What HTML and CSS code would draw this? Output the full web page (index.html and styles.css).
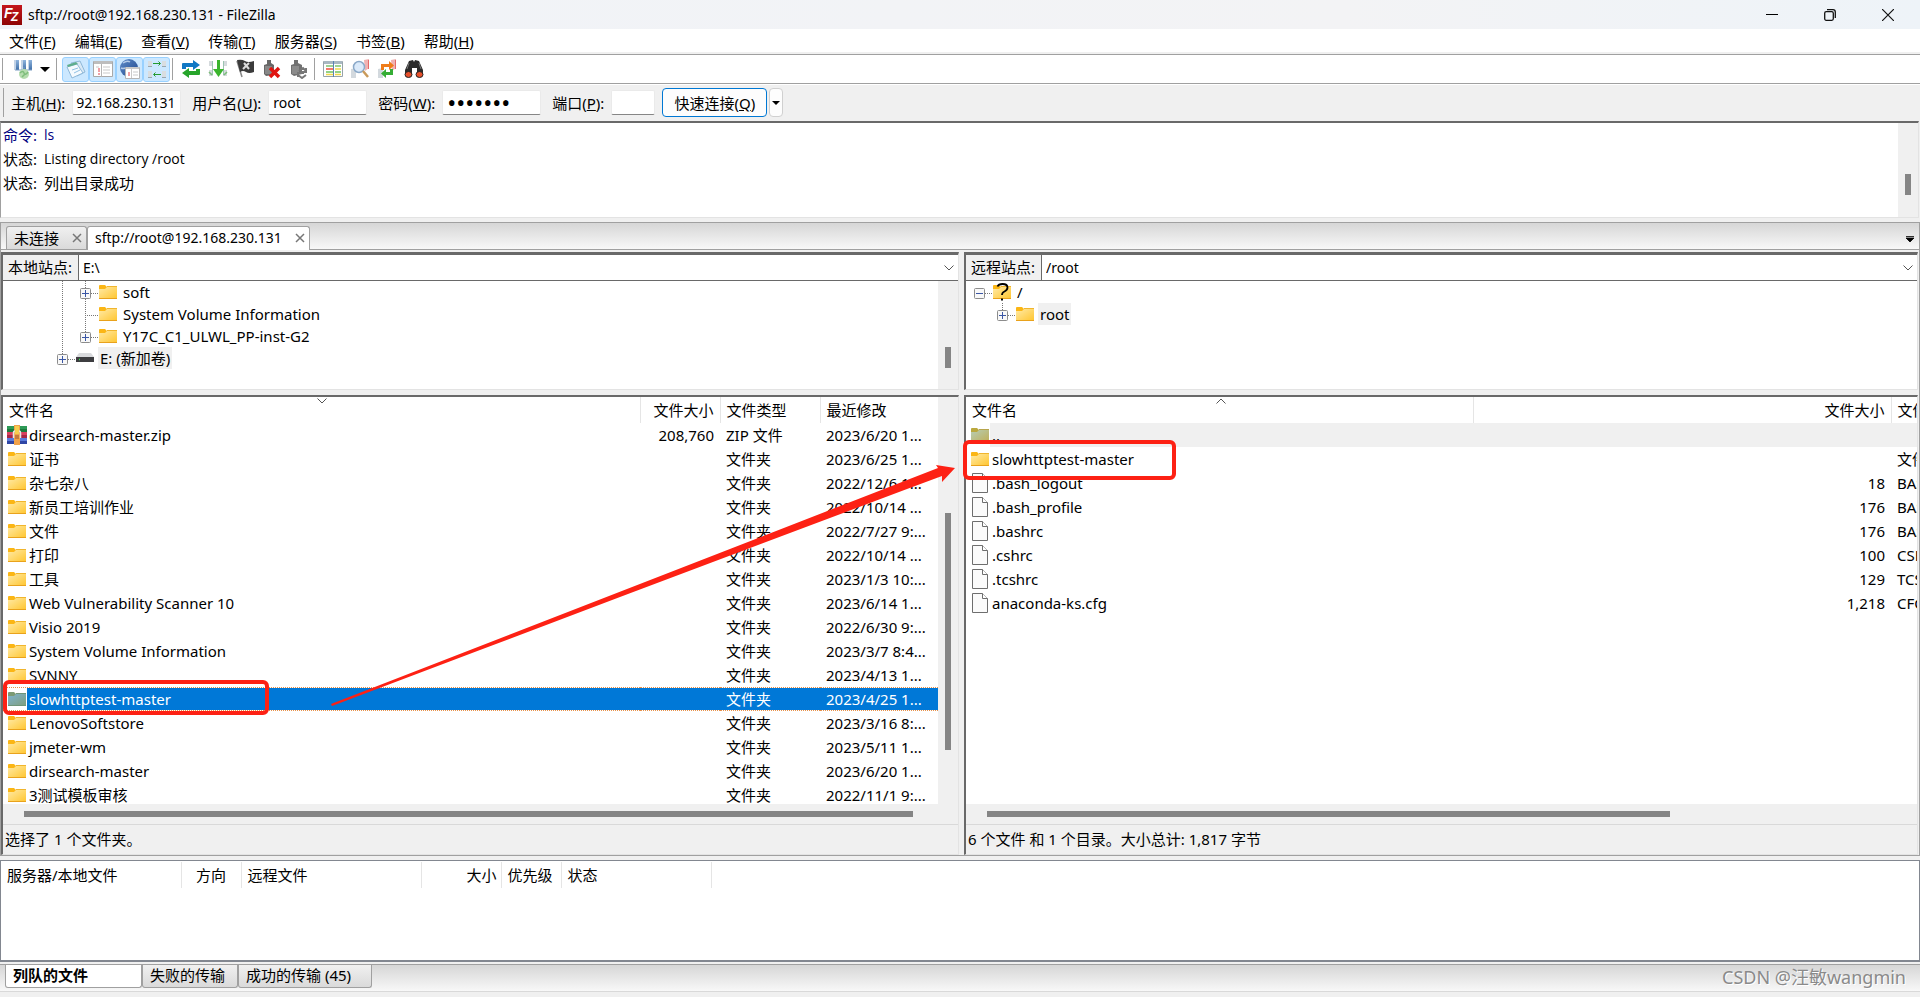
FILE: index.html
```html
<!DOCTYPE html>
<html lang="zh-CN">
<head>
<meta charset="utf-8">
<title>sftp://root@192.168.230.131 - FileZilla</title>
<link rel="stylesheet" href="styles.css">
</head>
<body>
<svg class="defs" width="0" height="0" aria-hidden="true">
  <defs>
    <linearGradient id="gFolder" x1="0" y1="0" x2="1" y2="1"><stop offset="0" stop-color="#ffeaa6"/><stop offset="1" stop-color="#ffc52e"/></linearGradient>
    <linearGradient id="gFolderSel" x1="0" y1="0" x2="1" y2="1"><stop offset="0" stop-color="#7fb2cf"/><stop offset="1" stop-color="#7f9f7c"/></linearGradient>
    <linearGradient id="gFolderDim" x1="0" y1="0" x2="1" y2="1"><stop offset="0" stop-color="#b7cdb4"/><stop offset="1" stop-color="#c0ae57"/></linearGradient>
    <linearGradient id="gLogo" x1="0" y1="0" x2="0" y2="1"><stop offset="0" stop-color="#c4161c"/><stop offset="1" stop-color="#8e0505"/></linearGradient>
    <linearGradient id="gServer" x1="0" y1="0" x2="0" y2="1"><stop offset="0" stop-color="#8fb4dd"/><stop offset="1" stop-color="#3f6fa8"/></linearGradient>
    <linearGradient id="gGlobe" x1="0" y1="0" x2="1" y2="1"><stop offset="0" stop-color="#5f8cc9"/><stop offset="1" stop-color="#1d468c"/></linearGradient>
  </defs>
  <symbol id="folder" viewBox="0 0 18 14"><path d="M0 1q0-1 1-1h5l2 2v3H0z" fill="#fbb615"/><path d="M0 4h6l2-2h10v12H0z" fill="url(#gFolder)"/><path d="M0 13.500h18" stroke="#e9a21c"/><path d="M8 1.500h10" stroke="#f0b52e"/></symbol>
  <symbol id="folder-sel" viewBox="0 0 18 14"><path d="M0 1q0-1 1-1h5l2 2v3H0z" fill="#7c9a74"/><path d="M0 4h6l2-2h10v12H0z" fill="url(#gFolderSel)"/><path d="M0 13.500h18M8 1.500h10" stroke="#6f9579"/></symbol>
  <symbol id="folder-dim" viewBox="0 0 18 14"><path d="M0 1q0-1 1-1h5l2 2v3H0z" fill="#bba83e"/><path d="M0 4h6l2-2h10v12H0z" fill="url(#gFolderDim)"/><path d="M0 13.500h18M8 1.500h10" stroke="#b7a54d"/></symbol>
  <symbol id="file" viewBox="0 0 16 20"><path d="M.5.500h10l5 5v14H.5z" fill="#fbfbfb" stroke="#6e6e6e"/><path d="M10.500.500v5h5" fill="#fff" stroke="#6e6e6e"/></symbol>
  <symbol id="zip" viewBox="0 0 20 20"><path fill="#2e9a57" d="M0 1h20v6H0z"/><path fill="#1c7a3c" d="M0 4h20v3H0z"/><path fill="#d8405e" d="M0 7h20v6H0z"/><path fill="#a82746" d="M0 10h20v3H0z"/><path fill="#5a7bdc" d="M0 13h20v6H0z"/><path fill="#2f46a5" d="M0 16h20v3H0z"/><path fill="#f1a24a" d="M7 0h6v20H7z"/><path fill="#f6ce4f" d="M8 1h4v8H8z"/><path d="M6.500 13V8q0-2 1.500-2M13.500 13V8q0-2-1.500-2" fill="none" stroke="#e6e6ea" stroke-width="1.500"/><path fill="#c67a3c" d="M8 10h4v4H8z"/></symbol>
  <symbol id="chev" viewBox="0 0 10 6"><path d="M.5.500L5 5 9.500.500" fill="none" stroke="#555"/></symbol>
  <symbol id="caret" viewBox="0 0 10 5"><path d="M0 0h10L5 5z" fill="#000"/></symbol>
  <symbol id="cross" viewBox="0 0 10 10"><path d="M1 1l8 8M9 1l-8 8" stroke="#777" stroke-width="1.500"/></symbol>
</svg>

<div class="app">
  <header class="title-bar">
    <svg class="logo" viewBox="0 0 20 20"><path fill="url(#gLogo)" d="M0 0h20v20H0z"/><text x="2" y="13" class="logo-f">F</text><text x="9" y="16" class="logo-z">Z</text></svg>
    <h1 class="title">sftp://root@192.168.230.131 - FileZilla</h1>
    <div class="window-buttons">
      <button class="window-button" aria-label="最小化"><svg width="12" height="12"><path d="M0 5.500h12" stroke="#000"/></svg></button>
      <button class="window-button" aria-label="还原"><svg width="12" height="12" fill="none" stroke="#111"><rect x=".7" y="2.700" width="8.600" height="8.600" rx="1.500" stroke-width="1.300"/><path d="M3 .7h6q2.300 0 2.300 2.300v6" stroke-width="1.300"/></svg></button>
      <button class="window-button" aria-label="关闭"><svg width="12" height="12"><path d="M0 0l12 12M12 0L0 12" stroke="#111" stroke-width="1.200"/></svg></button>
    </div>
  </header>

  <nav class="menu-bar">
    <button class="menu">文件(<u>F</u>)</button><button class="menu">编辑(<u>E</u>)</button><button class="menu">查看(<u>V</u>)</button><button class="menu">传输(<u>T</u>)</button><button class="menu">服务器(<u>S</u>)</button><button class="menu">书签(<u>B</u>)</button><button class="menu">帮助(<u>H</u>)</button>
  </nav>

  <div class="tool-bar">
    <span class="rule"></span>
    <button class="tool tool-site" aria-label="站点管理器"><svg viewBox="0 0 20 20"><path fill="#c3d3e6" d="M1 1h5v10H1zM8 1h5v10H8zM15 1h4v10h-4z"/><path fill="url(#gServer)" d="M3 1h3v10H3zM10 1h3v10h-3zM16 1h3v10h-3z"/><path d="M2 11h17M11 8v5" stroke="#7f9fc4"/><circle cx="11" cy="15" r="5" fill="#b5dcae"/><path d="M7 14q3-3 4 0t4-1M9 18l3-3" stroke="#7fbd7c" stroke-width="1.500" fill="none"/></svg></button>
    <button class="tool-drop" aria-label="站点列表"><svg width="10" height="5"><use href="#caret"/></svg></button>
    <span class="rule"></span>
    <div class="toggles">
      <button class="toggle" aria-label="消息日志"><svg viewBox="0 0 20 20"><path d="M5 4l9-2 5 11-8 4z" fill="#d9e9f6" stroke="#8fb8d8"/><path d="M1 8l10-3 6 9-11 5z" fill="#f5fafe" stroke="#8fb8d8"/><path d="M6 11l6-2M8 14l6-3" stroke="#8fc0e4"/><path d="M1 6l9-3 2 2-10 3z" fill="#5fae8d"/></svg></button>
      <button class="toggle" aria-label="本地目录树"><svg viewBox="0 0 20 20"><path d="M.5 2.500h19v15H.5z" fill="#fff" stroke="#a9a9a9"/><path d="M1 2h18v3H1z" fill="#bdbdbd"/><path d="M8.500 5v13" stroke="#b5b5b5"/><path d="M10 8h7M10 11h7M10 14h7M3 8h3" stroke="#c9c9c9"/><path d="M5 10h2M5 12h2M5 15h2" stroke="#e0404c"/></svg></button>
      <button class="toggle" aria-label="远程目录树"><svg viewBox="0 0 20 20"><circle cx="9" cy="9" r="9" fill="url(#gGlobe)"/><path d="M3 4q4-3 7-1M1 9q2 1 4 0" stroke="#b3cbe9" stroke-width="1.500" fill="none"/><path d="M5.500 8.500h14v11h-14z" fill="#fff" stroke="#b5b5b5"/><path d="M6 8h13v2H6z" fill="#c9c9c9"/><path d="M11.500 10v9M13 13h5M13 16h5" stroke="#c9c9c9"/><path d="M8 14h2M8 16h2" stroke="#e0404c"/></svg></button>
      <button class="toggle" aria-label="传输队列"><svg viewBox="0 0 20 20"><path d="M1 2h4v5H1zM15 2h4v5h-4zM1 12h4v6H1zM15 12h4v6h-4z" fill="#d9dde0"/><path d="M1 7.500h4M15 7.500h4M1 18.500h4M15 18.500h4" stroke="#9aa7b0"/><path d="M6 4.500h7M11.500 2.500l2 2-2 2M14 15.500H7M8.500 13.500l-2 2 2 2" stroke="#239a2f" fill="none"/></svg></button>
    </div>
    <span class="rule"></span>
    <div class="tools">
      <button class="tool" aria-label="刷新"><svg viewBox="0 0 20 20"><path d="M1 10V5q0-1 1-1h10V1l7 5-7 5V8H5v2z" fill="#1178c4"/><path d="M19 10v5q0 1-1 1H8v3l-7-5 7-5v3h7v-2z" fill="#27a52b"/></svg></button>
      <button class="tool" aria-label="处理队列"><svg viewBox="0 0 20 20"><path d="M1 2h4v5H1zM15 2h4v5h-4zM1 11h4v6H1zM15 11h4v6h-4z" fill="#d5dadd"/><path d="M4.500 2v14M15.500 2v14" stroke="#9cc4b2"/><path d="M9 1h3v9h4l-5.500 8L5 10h4z" fill="#3bb52d"/><path d="M1 13l3 3M19 13l-3 3" stroke="#7cbd7a" stroke-width="1.500"/></svg></button>
      <button class="tool" aria-label="取消操作"><svg viewBox="0 0 20 20"><path d="M2 2l5 16" stroke="#888" stroke-width="1.500"/><path d="M2 1q5-1 8 1t9 0v11q-5 2-8 0t-6 0z" fill="#3b3b3b"/><path d="M9 4l5 6M14 4l-6 6" stroke="#ddd" stroke-width="2"/></svg></button>
      <button class="tool" aria-label="断开连接"><svg viewBox="0 0 20 20"><path d="M2 6l3-1V1h4v3l3 2v10l-8 1-2-2z" fill="#686868"/><path d="M3 7h7v8H3z" fill="#888"/><path d="M8 9l9 9M17 9l-9 9" stroke="#e01510" stroke-width="3.500"/></svg></button>
      <button class="tool" aria-label="重新连接"><svg viewBox="0 0 20 20"><path d="M2 6l3-1V1h4v3l4 2v9l-8 2-3-2z" fill="#717171"/><path d="M3 7h7v8H3z" fill="#8c8c8c"/><path d="M17 9v4h-5M9 18v-4h6M10 12l4-3 3 3M17 16l-4 3-4-3" stroke="#777" stroke-width="2" fill="none"/></svg></button>
    </div>
    <span class="rule"></span>
    <div class="tools">
      <button class="tool" aria-label="目录列表过滤器"><svg viewBox="0 0 20 20"><path d="M.5 2.500h19v15H.5z" fill="#fff" stroke="#97a3aa"/><path d="M1 2h18v3H1z" fill="#a9b8c2"/><path d="M3 7h7M12 7h6" stroke="#7fc36f" stroke-width="1.500"/><path d="M3 10h7" stroke="#f04b3a" stroke-width="1.500"/><path d="M12 10h6" stroke="#efd84a" stroke-width="1.500"/><path d="M3 13h7M12 13h6" stroke="#6fc35f" stroke-width="1.500"/><path d="M3 15.500h7M12 15.500h6" stroke="#efd84a" stroke-width="1.500"/><path d="M10.500 2v16" stroke="#5a83b4"/></svg></button>
      <button class="tool" aria-label="目录比较"><svg viewBox="0 0 20 20"><path d="M14 1l5-1v9l-4 3z" fill="#f0b2b2"/><path d="M18.500 1v9" stroke="#e46a6a"/><path d="M1 10l5-1v10H1z" fill="#d3d9de"/><circle cx="9" cy="8" r="5.500" fill="#dbeafa" stroke="#8ba9c9" stroke-width="1.500"/><path d="M13 12l5 6" stroke="#c99a5a" stroke-width="2.500"/></svg></button>
      <button class="tool" aria-label="同步浏览"><svg viewBox="0 0 20 20"><path d="M14 1l5-1v9l-4 3z" fill="#f0b2b2"/><path d="M18.500 1v9" stroke="#e46a6a"/><path d="M1 10l5-1v10H1z" fill="#d3d9de"/><path d="M4 11V5h8V2l5 4.500-5 4.500V8H7v3z" fill="#ef7d1a"/><path d="M16 10v6H9v3l-5-4.500L9 10v3h4v-3z" fill="#35ad35"/></svg></button>
      <button class="tool" aria-label="搜索远程文件"><svg viewBox="0 0 20 20"><path d="M5 2l4-1 1 2 1-2 4 1 4 9v5h-6V9H8v7H1v-5z" fill="#2b2b2b"/><path d="M5 4L3 10M15 4l2 6" stroke="#777"/><ellipse cx="4.500" cy="15.500" rx="3.500" ry="3" fill="#e8502b" stroke="#222"/><ellipse cx="15.500" cy="15.500" rx="3.500" ry="3" fill="#e8502b" stroke="#222"/></svg></button>
    </div>
  </div>

  <form class="quick-connect">
    <span class="rule"></span>
    <label class="qc-label" for="host">主机(<u>H</u>):</label><input class="field field-host" id="host" value="92.168.230.131">
    <label class="qc-label" for="user">用户名(<u>U</u>):</label><input class="field field-user" id="user" value="root">
    <label class="qc-label" for="pass">密码(<u>W</u>):</label><input class="field field-pass" id="pass" type="password" value="1234567">
    <label class="qc-label" for="port">端口(<u>P</u>):</label><input class="field field-port" id="port">
    <button class="connect" type="button">快速连接(<u>Q</u>)</button>
    <button class="connect-drop" type="button" aria-label="历史记录"><svg width="8" height="4"><use href="#caret"/></svg></button>
  </form>

  <section class="log">
    <div class="log-text">
      <p class="log-line log-command"><span class="log-kind">命令:</span><span class="log-latin">ls</span></p>
      <p class="log-line"><span class="log-kind">状态:</span><span class="log-latin">Listing directory /root</span></p>
      <p class="log-line"><span class="log-kind">状态:</span><span>列出目录成功</span></p>
    </div>
    <div class="scroll-y"><span class="thumb log-thumb"></span></div>
  </section>

  <section class="session">
    <div class="tabs">
      <button class="tab">未连接<svg width="10" height="10"><use href="#cross"/></svg></button>
      <button class="tab tab-active">sftp://root@192.168.230.131<svg width="10" height="10"><use href="#cross"/></svg></button>
      <button class="tab-list" aria-label="标签列表"><svg width="8" height="6"><path d="M0 .5h8M0 2h8L4 6z" stroke="#000" stroke-width=".8"/></svg></button>
    </div>
    <div class="panes">
      <div class="pane">
        <div class="pane-top">
          <div class="site-bar">
            <label class="site-label" for="local">本地站点:</label>
            <div class="combo"><select class="combo-select" id="local"><option>E:\</option></select><svg class="combo-arrow" width="10" height="6"><use href="#chev"/></svg></div>
          </div>
          <div class="tree-area">
            <ul class="tree">
              <li class="tree-row"><svg class="gutter" width="96" height="22"><path class="dots" d="M59.500 0v22M82.500 0v22M88 12.500h7"/><rect class="box" x="77.500" y="7.500" width="10" height="10" rx="1"/><path class="sign" d="M79 12.500h7M82.500 9v7"/></svg><svg width="18" height="14"><use href="#folder"/></svg><span class="tree-name">soft</span></li>
              <li class="tree-row"><svg class="gutter" width="96" height="22"><path class="dots" d="M59.500 0v22M82.500 0v22M82 12.500h13"/></svg><svg width="18" height="14"><use href="#folder"/></svg><span class="tree-name">System Volume Information</span></li>
              <li class="tree-row"><svg class="gutter" width="96" height="22"><path class="dots" d="M59.500 0v22M82.500 0v7M88 12.500h7"/><rect class="box" x="77.500" y="7.500" width="10" height="10" rx="1"/><path class="sign" d="M79 12.500h7M82.500 9v7"/></svg><svg width="18" height="14"><use href="#folder"/></svg><span class="tree-name">Y17C_C1_ULWL_PP-inst-G2</span></li>
              <li class="tree-row"><svg class="gutter" width="73" height="22"><path class="dots" d="M59.500 0v7M65 12.500h7"/><rect class="box" x="54.500" y="7.500" width="10" height="10" rx="1"/><path class="sign" d="M56 12.500h7M59.500 9v7"/></svg><svg width="18" height="14"><path d="M3 2h12l3 4H0z" fill="#d9dadd"/><path d="M0 6h18v5H0z" fill="#3d3d40"/><path d="M3 8.500h1" stroke="#2fe04a" stroke-width="1.500"/></svg><span class="tree-name tree-current">E: (新加卷)</span></li>
            </ul>
            <div class="scroll-y"><span class="thumb tree-thumb"></span></div>
          </div>
        </div>
        <div class="pane-files">
          <div class="files-area">
            <div class="files-scroll">
              <svg class="sort sort-local" width="10" height="6"><use href="#chev"/></svg>
              <table class="files">
                <colgroup><col><col class="w-size"><col class="w-type"><col class="w-date"></colgroup>
                <thead><tr><th>文件名</th><th class="num">文件大小</th><th>文件类型</th><th>最近修改</th></tr></thead>
                <tbody>
                  <tr><td><div class="name"><svg width="20" height="20" class="zip"><use href="#zip"/></svg>dirsearch-master.zip</div></td><td class="num">208,760</td><td>ZIP 文件</td><td>2023/6/20 1...</td></tr>
                  <tr><td><div class="name"><svg width="18" height="14"><use href="#folder"/></svg>证书</div></td><td></td><td>文件夹</td><td>2023/6/25 1...</td></tr>
                  <tr><td><div class="name"><svg width="18" height="14"><use href="#folder"/></svg>杂七杂八</div></td><td></td><td>文件夹</td><td>2022/12/6 1...</td></tr>
                  <tr><td><div class="name"><svg width="18" height="14"><use href="#folder"/></svg>新员工培训作业</div></td><td></td><td>文件夹</td><td>2022/10/14 ...</td></tr>
                  <tr><td><div class="name"><svg width="18" height="14"><use href="#folder"/></svg>文件</div></td><td></td><td>文件夹</td><td>2022/7/27 9:...</td></tr>
                  <tr><td><div class="name"><svg width="18" height="14"><use href="#folder"/></svg>打印</div></td><td></td><td>文件夹</td><td>2022/10/14 ...</td></tr>
                  <tr><td><div class="name"><svg width="18" height="14"><use href="#folder"/></svg>工具</div></td><td></td><td>文件夹</td><td>2023/1/3 10:...</td></tr>
                  <tr><td><div class="name"><svg width="18" height="14"><use href="#folder"/></svg>Web Vulnerability Scanner 10</div></td><td></td><td>文件夹</td><td>2023/6/14 1...</td></tr>
                  <tr><td><div class="name"><svg width="18" height="14"><use href="#folder"/></svg>Visio 2019</div></td><td></td><td>文件夹</td><td>2022/6/30 9:...</td></tr>
                  <tr><td><div class="name"><svg width="18" height="14"><use href="#folder"/></svg>System Volume Information</div></td><td></td><td>文件夹</td><td>2023/3/7 8:4...</td></tr>
                  <tr><td><div class="name"><svg width="18" height="14"><use href="#folder"/></svg>SVNNY</div></td><td></td><td>文件夹</td><td>2023/4/13 1...</td></tr>
                  <tr class="selected"><td><div class="name"><svg width="18" height="14"><use href="#folder-sel"/></svg>slowhttptest-master</div></td><td></td><td>文件夹</td><td>2023/4/25 1...</td></tr>
                  <tr><td><div class="name"><svg width="18" height="14"><use href="#folder"/></svg>LenovoSoftstore</div></td><td></td><td>文件夹</td><td>2023/3/16 8:...</td></tr>
                  <tr><td><div class="name"><svg width="18" height="14"><use href="#folder"/></svg>jmeter-wm</div></td><td></td><td>文件夹</td><td>2023/5/11 1...</td></tr>
                  <tr><td><div class="name"><svg width="18" height="14"><use href="#folder"/></svg>dirsearch-master</div></td><td></td><td>文件夹</td><td>2023/6/20 1...</td></tr>
                  <tr><td><div class="name"><svg width="18" height="14"><use href="#folder"/></svg>3测试模板审核</div></td><td></td><td>文件夹</td><td>2022/11/1 9:...</td></tr>
                </tbody>
              </table>
            </div>
            <div class="scroll-y"><span class="thumb files-thumb"></span></div>
          </div>
          <div class="scroll-x scroll-x-local"><span class="thumb-x"></span></div>
          <div class="pane-status">选择了 1 个文件夹。</div>
        </div>
      </div>
      <div class="pane">
        <div class="pane-top">
          <div class="site-bar">
            <label class="site-label" for="remote">远程站点:</label>
            <div class="combo"><select class="combo-select" id="remote"><option>/root</option></select><svg class="combo-arrow" width="10" height="6"><use href="#chev"/></svg></div>
          </div>
          <div class="tree-area">
            <ul class="tree">
              <li class="tree-row"><svg class="gutter" width="27" height="22"><path class="dots" d="M19 12.500h7"/><rect class="box" x="8.500" y="7.500" width="10" height="10" rx="1"/><path class="sign" d="M10 12.500h7"/></svg><svg width="18" height="18" class="unknown"><use href="#folder" y="2" width="18" height="14"/><path d="M4.500 3.500q1-2.500 5-2.500 5 0 5 3.500 0 2.500-3 4-2.500 1-2.500 3.500" fill="none" stroke="#000" stroke-width="1.800"/><path d="M8 15.500h2v2H8z"/></svg><span class="tree-name">/</span></li>
              <li class="tree-row"><svg class="gutter" width="50" height="22"><path class="dots" d="M36.500 0v7M42 12.500h7"/><rect class="box" x="31.500" y="7.500" width="10" height="10" rx="1"/><path class="sign" d="M33 12.500h7M36.500 9v7"/></svg><svg width="18" height="14"><use href="#folder"/></svg><span class="tree-name tree-current">root</span></li>
            </ul>
          </div>
        </div>
        <div class="pane-files">
          <div class="files-area">
            <div class="files-scroll">
              <svg class="sort sort-remote" width="10" height="6"><use href="#chev"/></svg>
              <table class="files files-remote">
                <colgroup><col class="w-rname"><col><col class="w-rtype"></colgroup>
                <thead><tr><th>文件名</th><th class="num">文件大小</th><th>文件类型</th></tr></thead>
                <tbody>
                  <tr class="parent"><td><div class="name"><svg width="18" height="14"><use href="#folder-dim"/></svg>..</div></td><td></td><td></td></tr>
                  <tr><td><div class="name"><svg width="18" height="14"><use href="#folder"/></svg>slowhttptest-master</div></td><td></td><td>文件夹</td></tr>
                  <tr><td><div class="name"><svg width="18" height="20"><use href="#file"/></svg>.bash_logout</div></td><td class="num">18</td><td>BASH</td></tr>
                  <tr><td><div class="name"><svg width="18" height="20"><use href="#file"/></svg>.bash_profile</div></td><td class="num">176</td><td>BASH</td></tr>
                  <tr><td><div class="name"><svg width="18" height="20"><use href="#file"/></svg>.bashrc</div></td><td class="num">176</td><td>BASH</td></tr>
                  <tr><td><div class="name"><svg width="18" height="20"><use href="#file"/></svg>.cshrc</div></td><td class="num">100</td><td>CSHR</td></tr>
                  <tr><td><div class="name"><svg width="18" height="20"><use href="#file"/></svg>.tcshrc</div></td><td class="num">129</td><td>TCSH</td></tr>
                  <tr><td><div class="name"><svg width="18" height="20"><use href="#file"/></svg>anaconda-ks.cfg</div></td><td class="num">1,218</td><td>CFG</td></tr>
                </tbody>
              </table>
            </div>
          </div>
          <div class="scroll-x scroll-x-remote"><span class="thumb-x"></span></div>
          <div class="pane-status">6 个文件 和 1 个目录。大小总计: 1,817 字节</div>
        </div>
      </div>
    </div>
  </section>

  <section class="queue">
    <table class="queue-table">
      <thead><tr><th class="q-name">服务器/本地文件</th><th class="q-dir">方向</th><th class="q-remote">远程文件</th><th class="q-size">大小</th><th class="q-prio">优先级</th><th class="q-state">状态</th></tr></thead>
    </table>
  </section>
  <div class="queue-tabs">
    <button class="queue-tab queue-tab-active">列队的文件</button><button class="queue-tab queue-tab-failed">失败的传输</button><button class="queue-tab queue-tab-done">成功的传输 (45)</button>
    <span class="watermark">CSDN @汪敏wangmin</span>
  </div>
  <footer class="foot"></footer>

  <svg class="marks" width="1200" height="740" aria-hidden="true">
    <rect x="5" y="682" width="262" height="31" rx="4"/>
    <rect x="965" y="442" width="209" height="36" rx="4"/>
    <path d="M331 704L938 468 936 465 955 468 942 482 942 476 907 489 620 597 480 650 332 706z"/>
  </svg>
</div>
</body>
</html>
```
FILE: styles.css
```css
* { box-sizing: border-box; }

body {
  margin: 0;
  background: #f0f0f0;
  color: #000;
  font: 15px/24px "Noto Sans", "Noto Sans CJK SC", sans-serif;
}

button, input, select { font: inherit; color: inherit; border-radius: 0; }
button { margin: 0; padding: 0; border: 0; background: none; }
ul, p, h1 { margin: 0; padding: 0; list-style: none; }
svg { display: block; flex: none; }
table { border-collapse: collapse; }

.defs { position: absolute; }

.app {
  position: relative;
  display: flex;
  flex-direction: column;
  min-height: 100vh;
  overflow: hidden;
}

/* Title bar */
.title-bar {
  display: flex;
  align-items: center;
  height: 29px;
  padding: 0 3px 0 2px;
  background: linear-gradient(90deg, #f0f3f8, #f3f3f5 70%, #eef3f8);
}
.logo { width: 20px; height: 20px; }
.logo-f, .logo-z { fill: #fff; font-family: "Liberation Sans", sans-serif; font-style: italic; font-weight: bold; }
.logo-f { font-size: 14px; }
.logo-z { font-size: 12px; }
.title { margin-left: 6px; font-size: 14px; font-weight: 400; }
.window-buttons { display: flex; margin-left: auto; }
.window-button { display: flex; justify-content: center; width: 58px; }

/* Menu */
.menu-bar {
  display: flex;
  gap: 19px;
  height: 26px;
  padding-left: 9px;
  background: #fff;
  border-bottom: 1px solid #a0a0a0;
  box-shadow: inset 0 -2px #f0f0f0;
}
.menu { height: 24px; white-space: nowrap; }

/* Toolbar */
.tool-bar {
  display: flex;
  align-items: center;
  height: 29px;
  padding-left: 2px;
  background: #fff;
  border-bottom: 1px solid #a0a0a0;
}
.rule { width: 1px; height: 22px; background: #a0a0a0; }
.tool svg, .toggle svg { width: 20px; height: 20px; }
.tool-site { margin-left: 10px; }
.tool-drop { margin: 0 6px 0 7px; }
.toggles { display: flex; margin: 0 2px 0 5px; }
.toggle {
  display: flex;
  align-items: center;
  justify-content: center;
  width: 27px;
  height: 25px;
  background: #cce8ff;
  border: 1px solid #99d1ff;
  border-radius: 3px;
}
.tools { display: flex; gap: 7px; margin: 0 5px 0 8px; }

/* Quick connect */
.quick-connect {
  display: flex;
  align-items: center;
  height: 37px;
  padding: 0 0 1px 3px;
  border-top: 1px solid #fff;
}
.quick-connect .rule { height: 29px; }
.qc-label { padding: 0 7px; white-space: nowrap; }
.field {
  height: 25px;
  padding: 0 4px;
  border: 1px solid #eaeaea;
  border-bottom-color: #868686;
  border-radius: 2px;
  background: #fff;
  font-size: 14px;
}
.field + .qc-label { margin-left: 4px; }
.field-host { width: 109px; padding: 0 3px; }
.field-user { width: 99px; }
.field-pass { width: 99px; font-size: 24px; }
.field-port { width: 44px; }
.connect {
  width: 105px;
  height: 29px;
  margin-left: 7px;
  background: #fdfdfd;
  border: 1px solid #0078d4;
  border-radius: 4px;
}
.connect-drop {
  display: flex;
  align-items: center;
  justify-content: center;
  width: 14px;
  height: 29px;
  margin-left: 2px;
  background: #fdfdfd;
  border: 1px solid #d0d0d0;
  border-radius: 4px;
}

/* Message log */
.log {
  display: flex;
  height: 97px;
  margin-right: 1px;
  background: #fff;
  border: 1px solid #a0a0a0;
  border-top: 2px solid #696969;
  border-right-color: #e3e3e3;
  border-bottom-color: #e3e3e3;
}
.log-text { flex: 1; padding: 0 2px; }
.log-line { display: flex; }
.log-kind { width: 41px; }
.log-latin { font-family: "Open Sans", "Noto Sans CJK SC", sans-serif; font-size: 14px; }
.log-command { color: #000080; }

.scroll-y { display: flex; justify-content: center; width: 20px; background: #f0f0f0; }
.thumb { width: 6px; background: #858585; }
.log-thumb { height: 21px; margin-top: 51px; }
.tree-thumb { height: 21px; margin-top: 66px; }
.files-thumb { height: 237px; margin-top: 116px; }

/* Session area */
.session {
  flex: 1;
  display: flex;
  flex-direction: column;
  margin-top: 4px;
  border: 1px solid #a0a0a0;
}
.tabs {
  display: flex;
  align-items: flex-end;
  height: 27px;
  padding-left: 5px;
  background: linear-gradient(#d6d6d6, #f8f8f8);
  border-bottom: 1px solid #a0a0a0;
}
.tab {
  display: flex;
  align-items: center;
  gap: 13px;
  height: 23px;
  padding: 0 4px 1px 7px;
  background: linear-gradient(#f0f0f0, #dadada);
  border: 1px solid #a0a0a0;
  border-bottom: 0;
  border-radius: 3px 3px 0 0;
  white-space: nowrap;
}
.tab-active { height: 24px; margin-bottom: -1px; padding-bottom: 2px; background: #fff; font-size: 14px; }
.tab-list { margin: 0 5px 7px auto; }

.panes {
  flex: 1;
  display: grid;
  grid-template-columns: 50% minmax(0, 1fr);
  column-gap: 4px;
  padding-top: 2px;
}
.pane { display: flex; flex-direction: column; min-width: 0; padding-right: 1px; }
.pane-top, .pane-files {
  border-left: 2px solid #696969;
  border-top: 2px solid #696969;
  border-right: 1px solid #e3e3e3;
  border-bottom: 1px solid #e3e3e3;
  background: #fff;
}
.pane-top { border-top-width: 3px; }
.site-bar { display: flex; height: 26px; border-bottom: 1px solid #696969; }
.site-label {
  width: 76px;
  padding-left: 5px;
  background: #f0f0f0;
  border-right: 1px solid #696969;
  white-space: nowrap;
}
.combo { position: relative; flex: 1; display: flex; }
.combo-select { flex: 1; padding: 0 0 0 4px; border: 0; background: #fff; appearance: none; font-size: 14px; }
.combo-arrow { position: absolute; right: 4px; top: 10px; }

.tree-area { display: flex; height: 108px; }
.tree { flex: 1; }
.tree-row { display: flex; align-items: center; height: 22px; line-height: 22px; }
.tree-name { margin-left: 4px; padding: 0 2px; }
.tree-current { background: #f0f0f0; }
.dots { stroke: #777; stroke-dasharray: 1 1; fill: none; }
.box { fill: #f8f8f8; stroke: #8c8c8c; }
.sign { stroke: #3a56a5; fill: none; }

.pane-files { flex: 1; display: flex; flex-direction: column; margin-top: 5px; }
.files-area { flex: 1; display: flex; min-height: 406px; }
.files-scroll { position: relative; flex: 1; min-width: 0; contain: size; overflow: hidden; }
.sort { position: absolute; top: 1px; left: 314px; }
.sort-remote { left: 250px; transform: rotate(180deg); }
.files { width: 100%; table-layout: fixed; }
.files th, .files td {
  height: 24px;
  padding: 0 6px;
  font-weight: 400;
  text-align: left;
  white-space: nowrap;
  overflow: hidden;
}
.files th { height: 26px; border-right: 1px solid #e5e5e5; }
.files th:last-child { border-right: 0; }
.files th:last-child, .files td:last-child { padding-right: 0; }
.files .num { text-align: right; }
.files td:first-child { padding-left: 5px; }
.w-size { width: 80px; }
.w-type { width: 100px; }
.w-date { width: 118px; }
.w-rname { width: 507px; }
.w-rtype { width: 26px; }
.name { display: flex; align-items: center; gap: 3px; height: 24px; }
.zip { margin: 0 -1px; }
.selected { color: #fff; background: linear-gradient(90deg, #fff 24px, #0078d7 24px); }
.selected td { border-top: 1px dotted #e8914a; border-bottom: 1px dotted #e8914a; }
.selected td, .selected .name { height: 22px; line-height: 22px; }
.parent { background: linear-gradient(90deg, #fff 24px, #f0f0f0 24px); }

.scroll-x { display: flex; align-items: center; height: 20px; background: #f0f0f0; }
.scroll-x-local { padding: 0 45px 0 21px; }
.scroll-x-remote { padding: 0 247px 0 21px; }
.thumb-x { flex: 1; height: 6px; background: #858585; }
.pane-status { height: 30px; padding: 2px 2px 0; background: #f0f0f0; border-top: 1px solid #d9d9d9; }

/* Transfer queue */
.queue { height: 102px; margin-top: 4px; background: #fff; border: 1px solid #828790; border-bottom-width: 2px; }
.queue-table { table-layout: fixed; width: 710px; margin-top: 1px; }
.queue-table th { height: 26px; padding: 0 6px; font-weight: 400; text-align: left; border-right: 1px solid #e5e5e5; white-space: nowrap; }
.queue-table .q-name { width: 180px; }
.queue-table .q-dir { width: 60px; text-align: center; }
.queue-table .q-remote { width: 180px; }
.queue-table .q-size { width: 80px; padding-right: 4px; text-align: right; }
.queue-table .q-prio { width: 60px; }
.queue-table .q-state { width: 150px; }

.queue-tabs {
  position: relative;
  display: flex;
  height: 28px;
  margin-top: 2px;
  padding-left: 5px;
  background: linear-gradient(#d6d6d6, #f8f8f8);
  border-top: 1px solid #a0a0a0;
  border-bottom: 1px solid #d9d9d9;
}
.queue-tab {
  height: 23px;
  padding: 0 0 2px 7px;
  background: linear-gradient(#f0f0f0, #dadada);
  border: 1px solid #a0a0a0;
  border-top: 0;
  border-radius: 0 0 3px 3px;
  line-height: 20px;
  text-align: left;
  white-space: nowrap;
}
.queue-tab-active { width: 137px; background: #fff; font-weight: 700; }
.queue-tab-failed { width: 96px; }
.queue-tab-done { width: 134px; }
.watermark {
  margin-left: auto;
  padding-right: 14px;
  color: #8a8a8a;
  font-size: 18px;
  text-shadow: 1px 1px #fff;
}
.foot { height: 5px; }

/* Annotations drawn over the window */
.marks { position: absolute; left: 0; top: 0; pointer-events: none; }
.marks rect { fill: none; stroke: #fd2114; stroke-width: 4; }
.marks path { fill: #fd2114; }
```
